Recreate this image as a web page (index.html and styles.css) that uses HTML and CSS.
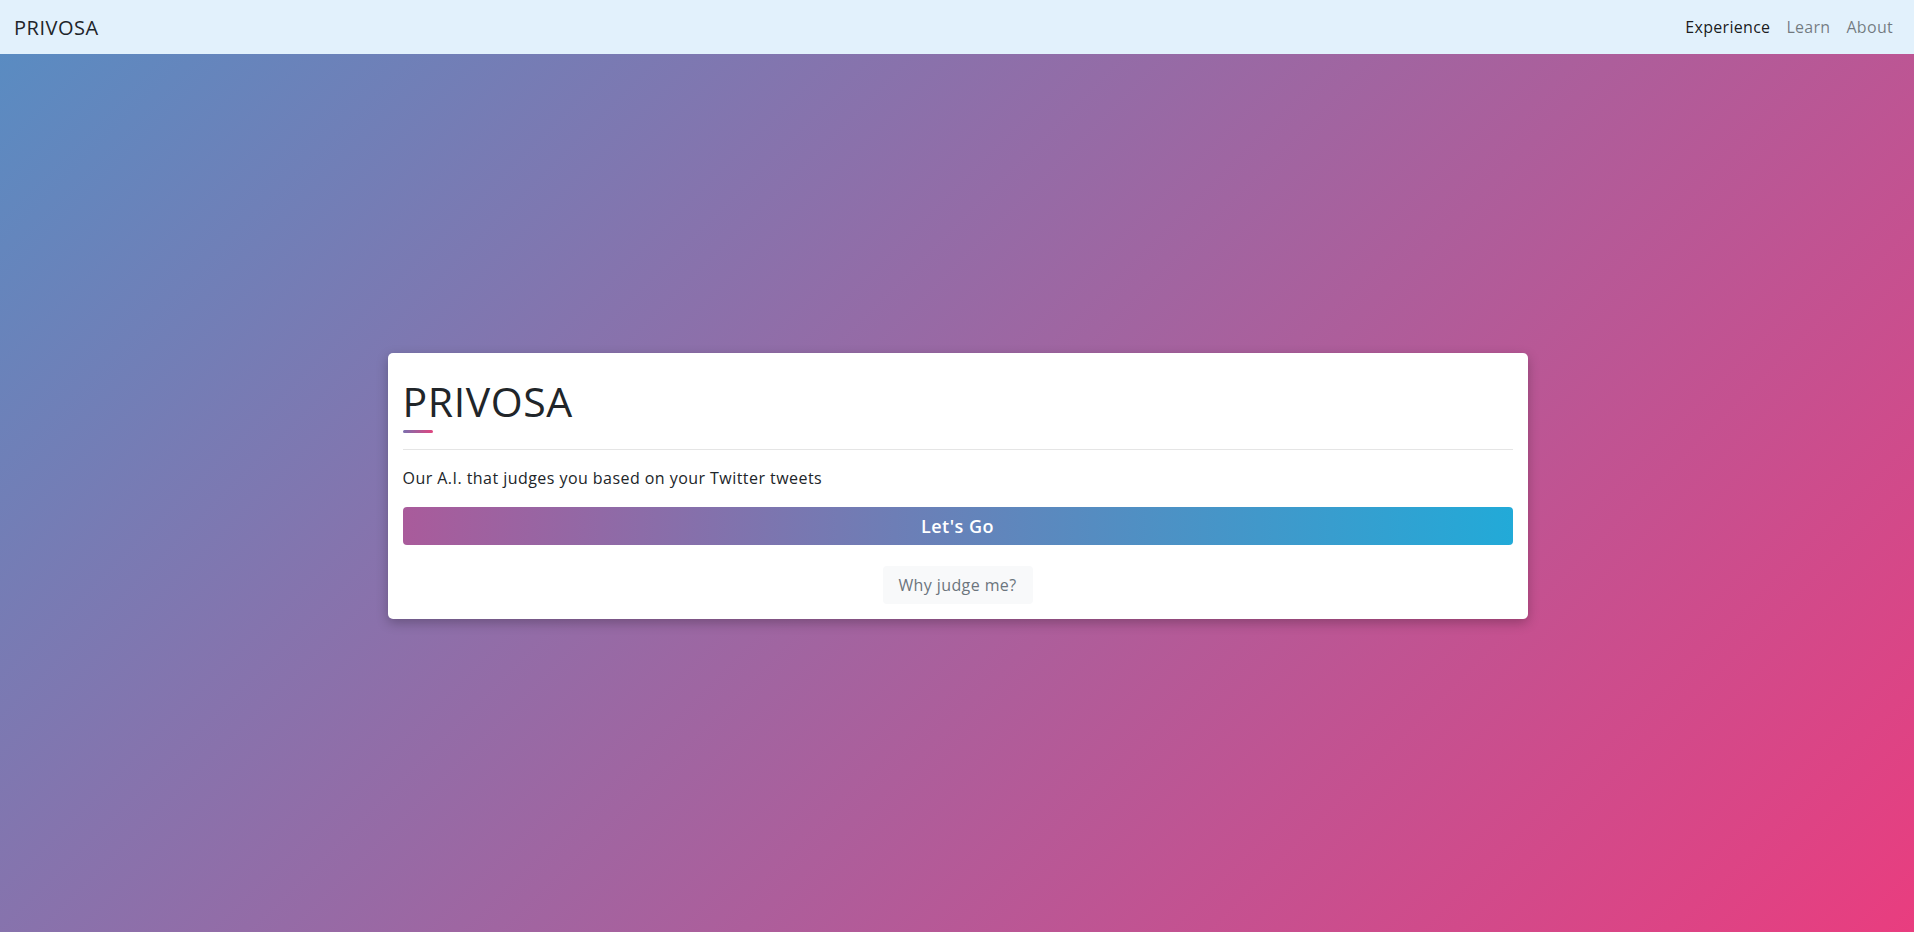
FILE: index.html
```html
<!DOCTYPE html>
<html lang="en">
<head>
<meta charset="utf-8">
<title>PRIVOSA</title>
<link rel="stylesheet" href="styles.css">
</head>
<body>
<nav class="navbar">
  <a class="brand" href="#">PRIVOSA</a>
  <ul class="nav">
    <li><a class="nav-link active" href="#">Experience</a></li>
    <li><a class="nav-link" href="#">Learn</a></li>
    <li><a class="nav-link" href="#">About</a></li>
  </ul>
</nav>
<main class="hero">
  <section class="card">
    <h1 class="title">PRIVOSA</h1>
    <div class="accent"></div>
    <hr class="divider">
    <p class="lead">Our A.I. that judges you based on your Twitter tweets</p>
    <button class="btn-go" type="button">Let's Go</button>
    <div class="why-row">
      <button class="btn-why" type="button">Why judge me?</button>
    </div>
  </section>
</main>
</body>
</html>
```

FILE: styles.css
```css
* { box-sizing: border-box; }
html, body { margin: 0; padding: 0; }
body {
  font-family: "Open Sans", "Liberation Sans", sans-serif;
  color: #212529;
  height: 100vh;
  display: flex;
  flex-direction: column;
  background: linear-gradient(135deg, #578dc3, #e93d7f);
}
.navbar {
  height: 54px;
  flex: none;
  background: #e2f1fc;
  display: flex;
  align-items: center;
  justify-content: space-between;
  padding: 0 13px 0 14px;
}
.brand {
  font-size: 20px;
  letter-spacing: 0.5px;
  color: #212529;
  text-decoration: none;
}
.nav {
  list-style: none;
  display: flex;
  margin: 0;
  padding: 0;
  gap: 0;
}
.nav-link {
  display: block;
  padding: 8px 8px;
  font-size: 16px;
  letter-spacing: 0.3px;
  color: rgba(0,0,0,.5);
  text-decoration: none;
}
.nav-link.active { color: rgba(0,0,0,.9); }
.hero {
  flex: 1;
  display: flex;
  align-items: center;
  justify-content: center;
  padding-bottom: 15px;
  padding-left: 1px;
}
.card {
  width: 1140px;
  background: #fff;
  border-radius: 5px;
  box-shadow: 0 4px 12px rgba(0,0,0,.25);
  padding: 15px;
  display: flex;
  flex-direction: column;
}
.title {
  margin: 9px 0 0;
  font-size: 41px;
  font-weight: 400;
  line-height: 48px;
  letter-spacing: 0.6px;
}
.accent {
  margin-top: 5px;
  width: 30px;
  height: 3px;
  border-radius: 2px;
  background: linear-gradient(to right, #7b6fae, #e0457f);
}
.divider {
  margin: 16px 0 0;
  border: 0;
  border-top: 1px solid #e5e5e5;
}
.lead {
  margin: 16px 0 0;
  font-size: 16px;
  line-height: 24px;
  letter-spacing: 0.45px;
}
.btn-go {
  margin-top: 17px;
  height: 38px;
  border: 0;
  border-radius: 4px;
  background: linear-gradient(to right, #a95b9b, #22aad8);
  color: #fff;
  font-family: inherit;
  font-size: 18px;
  font-weight: 600;
  letter-spacing: 0.5px;
}
.why-row {
  margin-top: 21px;
  display: flex;
  justify-content: center;
}
.btn-why {
  width: 150px;
  height: 38px;
  border: 0;
  border-radius: 4px;
  background: #f8f9fa;
  color: #6c757d;
  font-family: inherit;
  font-size: 16px;
  letter-spacing: 0.4px;
}
```
